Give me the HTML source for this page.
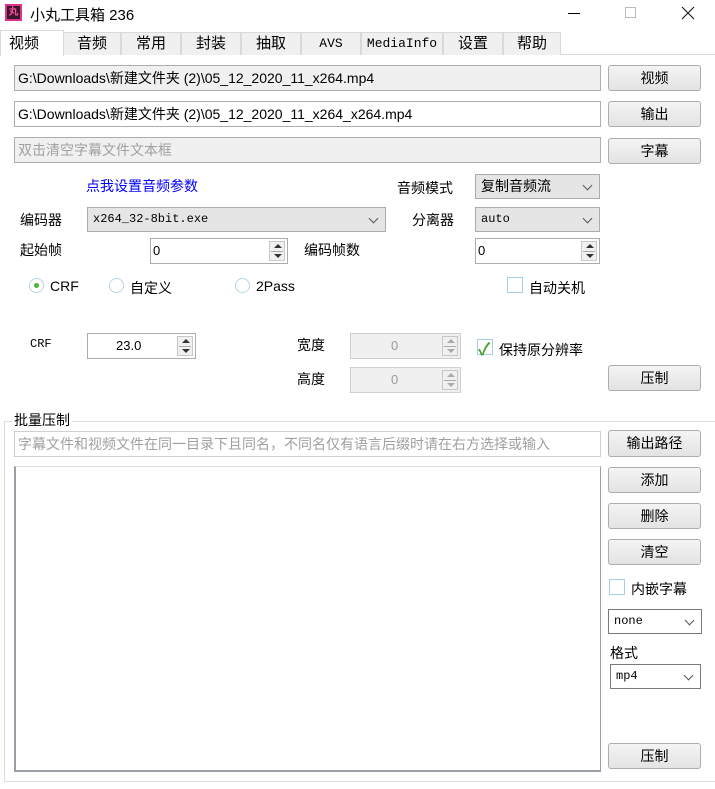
<!DOCTYPE html>
<html><head><meta charset="utf-8"><style>
*{box-sizing:border-box;margin:0;padding:0}
body{width:715px;height:789px;background:#fff;position:relative;overflow:hidden;font-family:"Liberation Sans","Noto Sans CJK SC",sans-serif;font-size:14px;color:#000}
.a{position:absolute;white-space:nowrap}
.tb{position:absolute;height:26px;border:1px solid #adadad;padding-left:3px;line-height:24px;font-size:14px}
.g{background:#f0f0f0}
.w{background:#fff}
.btn{position:absolute;width:93px;height:26px;border:1px solid #adadad;border-radius:3px;background:linear-gradient(#f4f4f4,#e3e3e3);text-align:center;line-height:24px;font-size:14px}
.cb{position:absolute;height:25px;border:1px solid #acacac;background:#e5e5e5;font-family:"Liberation Mono","Noto Sans CJK SC",monospace;font-size:12px;line-height:23px;padding-left:5px}
.cb.wh{background:#fff;border-color:#7a7a7a}
.cb:after{content:"";position:absolute;right:8px;top:7px;width:6px;height:6px;border-right:1px solid #555;border-bottom:1px solid #555;transform:rotate(45deg)}
.sp{position:absolute;height:26px;border:1px solid #acacac;background:#fff;font-size:13px;line-height:24px;padding-left:2px}
.sp .ar{position:absolute;right:2px;top:2px;width:16px;height:20px;border:1px solid #c8c8c8;background:#f0f0f0}
.sp .ar:before{content:"";position:absolute;left:4px;top:2px;border:4px solid transparent;border-bottom:4px solid #333;border-top:0}
.sp .ar:after{content:"";position:absolute;left:4px;bottom:2px;border:4px solid transparent;border-top:4px solid #333;border-bottom:0}
.sp .ar i{position:absolute;left:1px;right:1px;top:9px;border-top:1px solid #aaa}
.sp.dis{background:#f0f0f0;color:#999;border-color:#cfcfcf}
.sp.dis .ar:before{border-bottom-color:#aaa}.sp.dis .ar:after{border-top-color:#aaa}
.rad{position:absolute;width:15px;height:15px;border:1px solid #b9d4e5;border-radius:50%;background:#fff}
.chk{position:absolute;width:16px;height:16px;border:1px solid #a5cde8;background:#fff}
.tab{position:absolute;top:32px;height:23px;border:1px solid #d9d9d9;border-bottom:none;background:#f0f0f0;text-align:center;line-height:22px;font-size:15px}
.mono{font-family:"Liberation Mono","Noto Sans CJK SC",monospace;font-size:12px}
</style></head><body>
<div class="a" style="left:5px;top:4px;width:17px;height:17px;background:#e0318a;"><div style="position:absolute;left:2px;top:2px;width:13px;height:13px;background:#3a1726;color:#ff4aa6;font-size:10px;line-height:13px;text-align:center;font-weight:bold">丸</div></div>
<div class="a" style="left:30px;top:4px;font-size:15px">小丸工具箱 236</div>
<div class="a" style="left:568px;top:13px;width:12px;border-top:1px solid #000"></div>
<div class="a" style="left:625px;top:7px;width:11px;height:11px;border:1px solid #bbb"></div>
<svg class="a" style="left:681px;top:6px" width="14" height="14" viewBox="0 0 14 14"><path d="M1 1L13 13M13 1L1 13" stroke="#222" stroke-width="1.2" fill="none"/></svg>

<div class="a" style="left:0;top:54px;width:715px;border-top:1px solid #d9d9d9"></div>
<div class="tab" style="left:63px;width:58px">音频</div>
<div class="tab" style="left:121px;width:60px">常用</div>
<div class="tab" style="left:181px;width:60px">封装</div>
<div class="tab" style="left:241px;width:60px">抽取</div>
<div class="tab mono" style="left:301px;width:60px;font-size:13px">AVS</div>
<div class="tab mono" style="left:361px;width:82px;font-size:13px">MediaInfo</div>
<div class="tab" style="left:443px;width:60px">设置</div>
<div class="tab" style="left:503px;width:58px">帮助</div>
<div class="tab" style="left:0;top:30px;width:64px;height:26px;background:#fff;text-align:left;padding-left:8px;line-height:26px">视频</div>

<div class="tb g" style="left:14px;top:65px;width:587px">G:\Downloads\新建文件夹 (2)\05_12_2020_11_x264.mp4</div>
<div class="tb w" style="left:14px;top:101px;width:587px">G:\Downloads\新建文件夹 (2)\05_12_2020_11_x264_x264.mp4</div>
<div class="tb g" style="left:14px;top:137px;width:587px;color:#a0a0a0">双击清空字幕文件文本框</div>
<div class="btn" style="left:608px;top:65px">视频</div>
<div class="btn" style="left:608px;top:101px">输出</div>
<div class="btn" style="left:608px;top:138px">字幕</div>

<div class="a" style="left:86px;top:176px;color:#0000ff">点我设置音频参数</div>
<div class="a" style="left:397px;top:178px">音频模式</div>
<div class="cb" style="left:475px;top:174px;width:125px;font-family:'Liberation Sans','Noto Sans CJK SC',sans-serif;font-size:14px">复制音频流</div>
<div class="a" style="left:20px;top:210px">编码器</div>
<div class="cb" style="left:87px;top:207px;width:299px">x264_32-8bit.exe</div>
<div class="a" style="left:412px;top:210px">分离器</div>
<div class="cb" style="left:475px;top:207px;width:125px">auto</div>
<div class="a" style="left:20px;top:240px">起始帧</div>
<div class="sp" style="left:150px;top:238px;width:138px">0<div class="ar"><i></i></div></div>
<div class="a" style="left:304px;top:240px">编码帧数</div>
<div class="sp" style="left:475px;top:238px;width:125px">0<div class="ar"><i></i></div></div>

<div class="rad" style="left:29px;top:278px"><div style="position:absolute;left:4px;top:4px;width:5px;height:5px;border-radius:50%;background:#4fb03a"></div></div>
<div class="a" style="left:50px;top:278px">CRF</div>
<div class="rad" style="left:109px;top:278px"></div>
<div class="a" style="left:130px;top:278px">自定义</div>
<div class="rad" style="left:235px;top:278px"></div>
<div class="a" style="left:256px;top:278px">2Pass</div>
<div class="chk" style="left:507px;top:277px"></div>
<div class="a" style="left:529px;top:278px">自动关机</div>

<div class="a mono" style="left:30px;top:337px">CRF</div>
<div class="sp" style="left:87px;top:333px;width:109px;padding-left:28px">23.0<div class="ar"><i></i></div></div>
<div class="a" style="left:297px;top:335px">宽度</div>
<div class="sp dis" style="left:350px;top:333px;width:111px;padding-left:40px">0<div class="ar"><i></i></div></div>
<div class="a" style="left:297px;top:369px">高度</div>
<div class="sp dis" style="left:350px;top:367px;width:111px;padding-left:40px">0<div class="ar"><i></i></div></div>
<div class="chk" style="left:477px;top:339px"><div style="position:absolute;left:0;top:-5px;color:#4ca02e;font-size:17px;font-weight:bold">✓</div></div>
<div class="a" style="left:499px;top:340px">保持原分辨率</div>
<div class="btn" style="left:608px;top:365px">压制</div>

<div class="a" style="left:4px;top:421px;width:711px;height:361px;border:1px solid #dcdcdc;border-right:none"></div>
<div class="a" style="left:12px;top:410px;background:#fff;padding:0 2px">批量压制</div>
<div class="tb g" style="left:14px;top:431px;width:587px;color:#a0a0a0;background:#fff;border-color:#d0d0d0">字幕文件和视频文件在同一目录下且同名，不同名仅有语言后缀时请在右方选择或输入</div>
<div class="btn" style="left:608px;top:430px;height:27px">输出路径</div>
<div class="a" style="left:14px;top:466px;width:587px;height:306px;border:1px solid #dcdcdc;border-left:2px solid #9a9ea8;border-bottom:2px solid #9a9ea8;border-right:1px solid #9a9ea8"></div>
<div class="btn" style="left:608px;top:467px">添加</div>
<div class="btn" style="left:608px;top:503px">删除</div>
<div class="btn" style="left:608px;top:539px">清空</div>
<div class="chk" style="left:609px;top:579px"></div>
<div class="a" style="left:631px;top:579px">内嵌字幕</div>
<div class="cb wh" style="left:608px;top:609px;width:94px">none</div>
<div class="a" style="left:610px;top:643px">格式</div>
<div class="cb wh" style="left:610px;top:664px;width:91px">mp4</div>
<div class="btn" style="left:608px;top:743px">压制</div>
</body></html>
